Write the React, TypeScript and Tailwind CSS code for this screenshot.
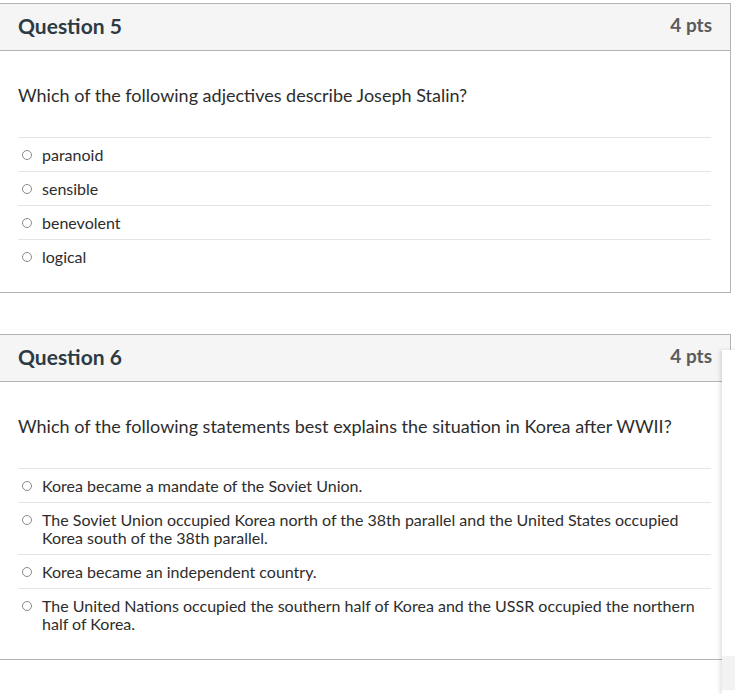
const QUESTIONS = [
  {
    n: 5,
    pts: 4,
    text: "Which of the following adjectives describe Joseph Stalin?",
    answers: ["paranoid", "sensible", "benevolent", "logical"],
  },
  {
    n: 6,
    pts: 4,
    text: "Which of the following statements best explains the situation in Korea after WWII?",
    answers: [
      "Korea became a mandate of the Soviet Union.",
      "The Soviet Union occupied Korea north of the 38th parallel and the United States occupied Korea south of the 38th parallel.",
      "Korea became an independent country.",
      "The United Nations occupied the southern half of Korea and the USSR occupied the northern half of Korea.",
    ],
  },
];

function Radio() {
  return (
    <span className="mt-[4px] ml-[4px] mr-[10px] h-[10px] w-[10px] shrink-0 rounded-full border border-[#8a8a8a] bg-white" />
  );
}

function QuestionCard({ q }: { q: (typeof QUESTIONS)[number] }) {
  return (
    <div className="-ml-px w-[732px] border border-[#b4b4b4] bg-white">
      <div className="flex h-[47px] items-center justify-between border-b border-[#b4b4b4] bg-[#f5f5f5] pb-[3px] pl-[18px] pr-[18px]">
        <h2 className="text-[21px] font-bold text-[#2d3b45]">Question {q.n}</h2>
        <span className="text-[19px] font-bold text-[#5b5b5b]">{q.pts} pts</span>
      </div>
      <div className="px-[18px] pb-[19px] pt-[32px]">
        <p className="text-[18px] leading-[24px] text-[#2d2d2d]">{q.text}</p>
        <div className="mt-[30px] mr-[1px]">
          {q.answers.map((a) => (
            <div key={a} className="flex border-t border-[#e4e4e4] py-[7.5px]">
              <Radio />
              <span className="text-[16px] leading-[18px] text-[#2d2d2d]">{a}</span>
            </div>
          ))}
        </div>
      </div>
    </div>
  );
}

export default function App() {
  return (
    <div className="relative min-h-[694px] overflow-hidden bg-white pt-[3px] font-['Lato','Liberation_Sans',sans-serif]">
      <div className="flex flex-col gap-[41px]">
        {QUESTIONS.map((q) => (
          <QuestionCard key={q.n} q={q} />
        ))}
      </div>
      <div className="absolute left-[722px] top-[350px] flex h-[344px] w-[20px] flex-col bg-white shadow-[-2px_0_4px_rgba(0,0,0,0.12)]">
        <div className="flex-1" />
        <div className="mb-[4px] h-[34px] bg-[#f2f2f2]" />
      </div>
    </div>
  );
}
